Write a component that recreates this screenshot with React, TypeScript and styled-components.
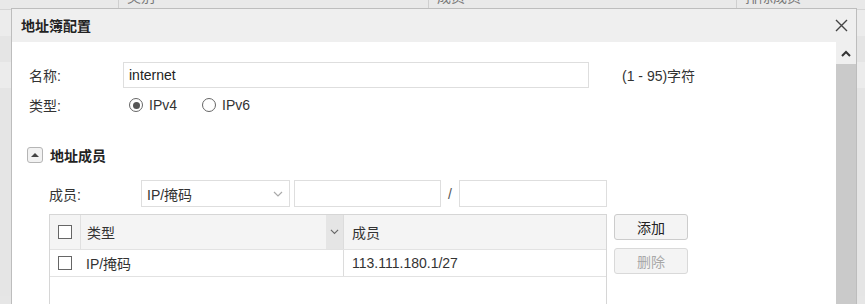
import React from "react";
import styled, { createGlobalStyle } from "styled-components";

const Global = createGlobalStyle`
  html, body { margin: 0; padding: 0; }
  body {
    background: #e6e6e6;
    overflow: hidden;
    font-family: "Liberation Sans", "Noto Sans CJK SC", sans-serif;
    font-size: 14px;
    color: #333;
  }
`;

const Page = styled.div`
  position: relative;
  width: 865px;
  height: 304px;
  overflow: hidden;
  background: #e6e6e6;
`;

const BgTable = styled.div`
  display: flex;
  flex-direction: column;
  margin-top: -17px;
`;

const BgHead = styled.div`
  display: grid;
  grid-template-columns: 118px 310px 308px 1fr;
  height: 26px;
  background: #e9e9e9;
  border-bottom: 1px solid #d6d6d6;
`;

const BgHeadCell = styled.div<{ $first?: boolean }>`
  display: flex;
  align-items: center;
  padding-left: 8px;
  color: #777;
  font-size: 14px;
  border-left: ${(p) => (p.$first ? "none" : "1px solid #cfcfcf")};
`;

const BgRow = styled.div<{ $alt?: boolean }>`
  height: 26px;
  background: ${(p) => (p.$alt ? "#ececec" : "#e5e5e5")};
`;

const Dialog = styled.div`
  position: absolute;
  left: 11px;
  top: 8px;
  width: 844px;
  height: 320px;
  border: 1px solid #bdbdbd;
  background: #fff;
  display: flex;
  flex-direction: column;
`;

const DialogHeader = styled.div`
  height: 33px;
  flex: none;
  background: #efefef;
  display: flex;
  align-items: center;
  justify-content: space-between;
  padding: 0 8px 0 9px;
`;

const Title = styled.div`
  font-size: 14px;
  font-weight: bold;
  color: #222;
  margin-top: -1px;
`;

const CloseBtn = styled.div`
  width: 14px;
  height: 14px;
  display: flex;
  align-items: center;
  justify-content: center;
`;

const DialogBody = styled.div`
  flex: 1;
  display: flex;
  min-height: 0;
`;

const Content = styled.div`
  flex: 1;
  background: #fff;
  padding: 20px 0 0 17px;
  display: flex;
  flex-direction: column;
`;

const Scrollbar = styled.div`
  width: 20px;
  flex: none;
  display: flex;
  flex-direction: column;
  background: #efefef;
`;

const ScrollArrow = styled.div`
  height: 22px;
  display: flex;
  align-items: center;
  justify-content: center;
`;

const ScrollThumb = styled.div`
  flex: 1;
  background: #cacaca;
`;

const FormRow = styled.div<{ $mt?: number }>`
  display: flex;
  align-items: center;
  height: 26px;
  margin-top: ${(p) => p.$mt ?? 0}px;
`;

const Label = styled.div<{ $w: number }>`
  width: ${(p) => p.$w}px;
  flex: none;
  color: #333;
`;

const TextInput = styled.div<{ $w: number; $h?: number }>`
  width: ${(p) => p.$w}px;
  height: ${(p) => p.$h ?? 26}px;
  box-sizing: border-box;
  border: 1px solid #dedede;
  display: flex;
  align-items: center;
  padding-left: 5px;
  color: #222;
  flex: none;
`;

const Hint = styled.div`
  margin-left: 33px;
  color: #333;
`;

const RadioItem = styled.div<{ $w: number }>`
  width: ${(p) => p.$w}px;
  flex: none;
  display: flex;
  align-items: center;
  gap: 6px;
  padding-left: 6px;
  box-sizing: border-box;
`;

const RadioCircle = styled.div<{ $on?: boolean }>`
  width: 14px;
  height: 14px;
  box-sizing: border-box;
  border-radius: 50%;
  border: 1px solid #666;
  display: flex;
  align-items: center;
  justify-content: center;
  &::after {
    content: "";
    width: 7px;
    height: 7px;
    border-radius: 50%;
    background: ${(p) => (p.$on ? "#555" : "transparent")};
  }
`;

const SectionHead = styled.div`
  display: flex;
  align-items: center;
  margin-top: 32px;
  margin-left: -2px;
  height: 16px;
  gap: 7px;
`;

const ToggleBox = styled.div`
  width: 16px;
  height: 16px;
  box-sizing: border-box;
  border: 1px solid #b5b5b5;
  border-radius: 3px;
  background: #f2f2f2;
  display: flex;
  align-items: center;
  justify-content: center;
  &::after {
    content: "";
    width: 0;
    height: 0;
    border-left: 4px solid transparent;
    border-right: 4px solid transparent;
    border-bottom: 4px solid #444;
    margin-top: -1px;
  }
`;

const SectionTitle = styled.div`
  font-size: 14px;
  font-weight: bold;
  color: #222;
`;

const MemberArea = styled.div`
  padding-left: 20px;
  display: flex;
  flex-direction: column;
`;

const MemberRow = styled.div`
  display: flex;
  align-items: center;
  height: 27px;
  margin-top: 17px;
`;

const Select = styled.div`
  width: 149px;
  height: 27px;
  box-sizing: border-box;
  border: 1px solid #dedede;
  display: flex;
  align-items: center;
  justify-content: space-between;
  padding: 0 6px 0 5px;
  margin-right: 4px;
  flex: none;
`;

const Slash = styled.div`
  width: 18px;
  text-align: center;
  color: #555;
  flex: none;
`;

const TableWrap = styled.div`
  display: flex;
  gap: 7px;
  margin-top: 7px;
`;

const Table = styled.div`
  width: 558px;
  height: 120px;
  box-sizing: border-box;
  border: 1px solid #d6d6d6;
  border-bottom: none;
  display: flex;
  flex-direction: column;
  flex: none;
`;

const TRow = styled.div<{ $head?: boolean }>`
  display: grid;
  grid-template-columns: 30px 1fr 263px;
  height: ${(p) => (p.$head ? 35 : 27)}px;
  background: ${(p) => (p.$head ? "#f4f4f4" : "#fff")};
  border-bottom: 1px solid #e2e2e2;
  box-sizing: border-box;
`;

const TCell = styled.div<{ $sep?: boolean; $pl?: number }>`
  display: flex;
  align-items: center;
  padding-left: ${(p) => p.$pl ?? 0}px;
  border-left: ${(p) => (p.$sep ? "1px solid #dcdcdc" : "none")};
  color: #333;
  min-width: 0;
`;

const CheckCell = styled(TCell)`
  justify-content: center;
  padding-left: 0;
`;

const Checkbox = styled.div`
  width: 14px;
  height: 14px;
  box-sizing: border-box;
  border: 1px solid #666;
  background: #fff;
`;

const TypeHeadCell = styled.div`
  display: flex;
  align-items: stretch;
  border-left: 1px solid #e0e0e0;
`;

const TypeHeadText = styled.div`
  flex: 1;
  display: flex;
  align-items: center;
  padding-left: 6px;
`;

const SortBtn = styled.div`
  width: 17px;
  background: #e5e5e5;
  display: flex;
  align-items: center;
  justify-content: center;
`;

const Buttons = styled.div`
  display: flex;
  flex-direction: column;
  gap: 8px;
`;

const Button = styled.div<{ $disabled?: boolean }>`
  width: 74px;
  height: 26px;
  box-sizing: border-box;
  border: 1px solid ${(p) => (p.$disabled ? "#d9d9d9" : "#cccccc")};
  border-radius: 3px;
  background: #f4f4f4;
  display: flex;
  align-items: center;
  justify-content: center;
  color: ${(p) => (p.$disabled ? "#a8a8a8" : "#222")};
  font-size: 14px;
`;

const Chevron = ({ color, size = 10 }: { color: string; size?: number }) => (
  <svg width={size} height={size * 0.6} viewBox="0 0 10 6">
    <path d="M1 1 L5 5 L9 1" fill="none" stroke={color} strokeWidth="1.2" />
  </svg>
);

export default function App() {
  return (
    <Page>
      <Global />
      <BgTable>
        <BgHead>
          <BgHeadCell $first />
          <BgHeadCell>类别</BgHeadCell>
          <BgHeadCell>成员</BgHeadCell>
          <BgHeadCell>排除成员</BgHeadCell>
        </BgHead>
        <BgRow $alt />
        <BgRow />
        <BgRow $alt />
        <BgRow />
        <BgRow />
        <BgRow />
        <BgRow />
        <BgRow />
        <BgRow />
        <BgRow />
        <BgRow />
      </BgTable>
      <Dialog>
        <DialogHeader>
          <Title>地址簿配置</Title>
          <CloseBtn>
            <svg width="13" height="13" viewBox="0 0 13 13">
              <path d="M1 1 L12 12 M12 1 L1 12" stroke="#444" strokeWidth="1.4" />
            </svg>
          </CloseBtn>
        </DialogHeader>
        <DialogBody>
          <Content>
            <FormRow>
              <Label $w={94}>名称:</Label>
              <TextInput $w={466}>internet</TextInput>
              <Hint>(1 - 95)字符</Hint>
            </FormRow>
            <FormRow $mt={7}>
              <Label $w={94}>类型:</Label>
              <RadioItem $w={73}>
                <RadioCircle $on />
                IPv4
              </RadioItem>
              <RadioItem $w={73}>
                <RadioCircle />
                IPv6
              </RadioItem>
            </FormRow>
            <SectionHead>
              <ToggleBox />
              <SectionTitle>地址成员</SectionTitle>
            </SectionHead>
            <MemberArea>
              <MemberRow>
                <Label $w={92}>成员:</Label>
                <Select>
                  IP/掩码
                  <Chevron color="#aaa" size={10} />
                </Select>
                <TextInput $w={147} $h={27} />
                <Slash>/</Slash>
                <TextInput $w={148} $h={27} />
              </MemberRow>
              <TableWrap>
                <Table>
                  <TRow $head>
                    <CheckCell>
                      <Checkbox />
                    </CheckCell>
                    <TypeHeadCell>
                      <TypeHeadText>类型</TypeHeadText>
                      <SortBtn>
                        <Chevron color="#666" size={9} />
                      </SortBtn>
                    </TypeHeadCell>
                    <TCell $sep $pl={8}>成员</TCell>
                  </TRow>
                  <TRow>
                    <CheckCell>
                      <Checkbox />
                    </CheckCell>
                    <TCell $pl={6}>IP/掩码</TCell>
                    <TCell $sep $pl={8}>113.111.180.1/27</TCell>
                  </TRow>
                </Table>
                <Buttons>
                  <Button>添加</Button>
                  <Button $disabled>删除</Button>
                </Buttons>
              </TableWrap>
            </MemberArea>
          </Content>
          <Scrollbar>
            <ScrollArrow>
              <svg width="10" height="7" viewBox="0 0 10 7">
                <path d="M1 6 L5 2 L9 6" fill="none" stroke="#333" strokeWidth="2" />
              </svg>
            </ScrollArrow>
            <ScrollThumb />
          </Scrollbar>
        </DialogBody>
      </Dialog>
    </Page>
  );
}
